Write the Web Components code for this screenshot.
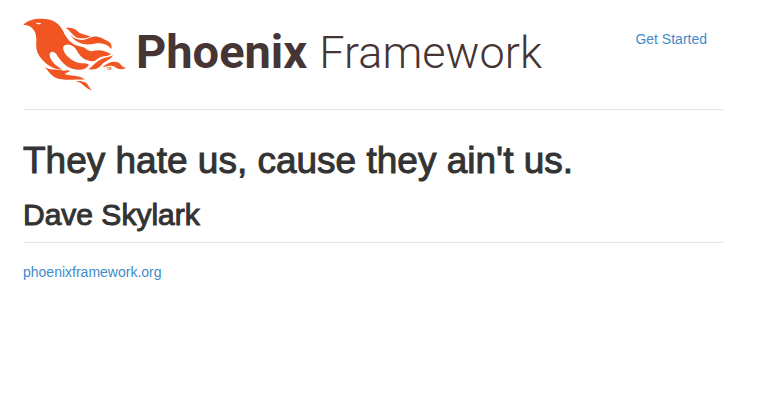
<!DOCTYPE html>
<html lang="en">
<head>
<meta charset="utf-8">
<meta name="viewport" content="width=device-width, initial-scale=1">
<title>Phoenix Framework</title>
<style>
body { margin: 0; background: #fff; color: #333; font: 14px/20px "Helvetica Neue", "Liberation Sans", Arial, sans-serif; }
</style>
</head>
<body>
<page-shell>
  <site-header slot="header"><nav-link href="#get-started">Get Started</nav-link></site-header>
  <quote-block><span slot="quote">They hate us, cause they ain't us.</span><span slot="author">Dave Skylark</span></quote-block>
  <nav-link slot="footer" href="#phoenixframework">phoenixframework.org</nav-link>
</page-shell>
<script>
function define(name, html) {
  customElements.define(name, class extends HTMLElement {
    constructor() {
      super();
      this.attachShadow({ mode: "open" }).innerHTML = html;
    }
    connectedCallback() {
      const link = this.shadowRoot.querySelector("a");
      if (link && this.hasAttribute("href")) link.href = this.getAttribute("href");
    }
  });
}

define("nav-link", `
<style>
:host { display: inline-block; }
a { color: #428bca; text-decoration: none; }
a:hover { text-decoration: underline; }
</style>
<a><slot></slot></a>`);

define("phoenix-bird", `
<style>
:host { display: block; flex: none; }
svg { display: block; width: 104px; height: 73px; }
</style>
<svg viewBox="24 24 312 219" aria-hidden="true">
<g fill="#f15524">
<path d="M25 44C38 31 55 26 78 26C115 26 132 40 144 62C154 86 170 104 194 109C212 112 214 122 230 124C250 117 270 121 288 133C276 141 260 137 248 146C238 155 228 155 218 151C198 146 190 128 182 116C174 103 150 98 145 110C141 125 160 146 183 156C200 163 210 156 222 164C214 180 190 181 175 177C150 170 136 150 127 137C118 121 104 123 104 135C106 155 125 168 142 179C120 178 100 168 88 155C66 135 62 118 64 93C66 68 54 45 25 44Z"/>
<path d="M152 54C170 52 180 56 190 66C200 74 215 74 226 80C208 87 193 86 181 80C170 73 164 60 152 54Z"/>
<path d="M166 76C184 92 203 93 220 85C246 72 262 86 276 92C288 97 292 106 289 117C276 100 254 98 238 101C212 107 186 103 166 76Z"/>
<path d="M87 170C105 182 124 176 140 181C151 184 156 178 165 183C160 188 152 188 149 192C163 199 190 193 211 209C190 208 160 212 134 207C108 201 103 184 87 170Z"/>
<path d="M182 213C202 212 216 217 219 225C221 231 226 236 231 240C210 237 207 219 182 213Z"/>
<path d="M220 178C235 168 240 156 260 147C274 141 286 141 294 136C288 149 270 153 260 164C248 179 234 179 220 178Z"/>
<path d="M262 172C276 158 296 152 308 157C318 161 320 172 333 174C320 180 308 178 300 171C290 164 278 168 262 172Z"/>
<text x="275" y="179" font-family="Liberation Sans, sans-serif" font-size="10" font-weight="700">TM</text>
</g>
<path d="M62 38L79 39C75 45 67 44 62 38Z" fill="#fff"/>
</svg>`);

define("site-header", `
<style>
:host { display: flex; justify-content: space-between; align-items: flex-start; padding: 18px 16px 18px 0; border-bottom: 1px solid #e5e5e5; }
.logo { display: flex; gap: 9px; }
.name { display: flex; align-items: baseline; gap: 12px; color: #463535; font: 700 47px/68px Roboto, sans-serif; white-space: nowrap; }
.light { font-size: 45px; font-weight: 300; }
nav { padding-top: 11px; }
</style>
<div class="logo"><phoenix-bird></phoenix-bird><div class="name"><span>Phoenix</span><span class="light">Framework</span></div></div>
<nav><slot></slot></nav>`);

define("quote-block", `
<style>
:host { display: block; padding: 31px 0 10px; border-bottom: 1px solid #e5e5e5; }
h1, h2 { margin: 0; font-weight: 400; -webkit-text-stroke: 1px #333; }
h1 { font-size: 37px; line-height: 40px; }
h2 { margin-top: 17px; font-size: 30px; line-height: 34px; }
</style>
<h1><slot name="quote"></slot></h1><h2><slot name="author"></slot></h2>`);

define("page-shell", `
<style>
:host { display: block; max-width: 700px; margin: 0 34px 0 23px; }
footer { padding-top: 19px; }
</style>
<slot name="header"></slot><main><slot></slot></main><footer><slot name="footer"></slot></footer>`);
</script>
</body>
</html>
